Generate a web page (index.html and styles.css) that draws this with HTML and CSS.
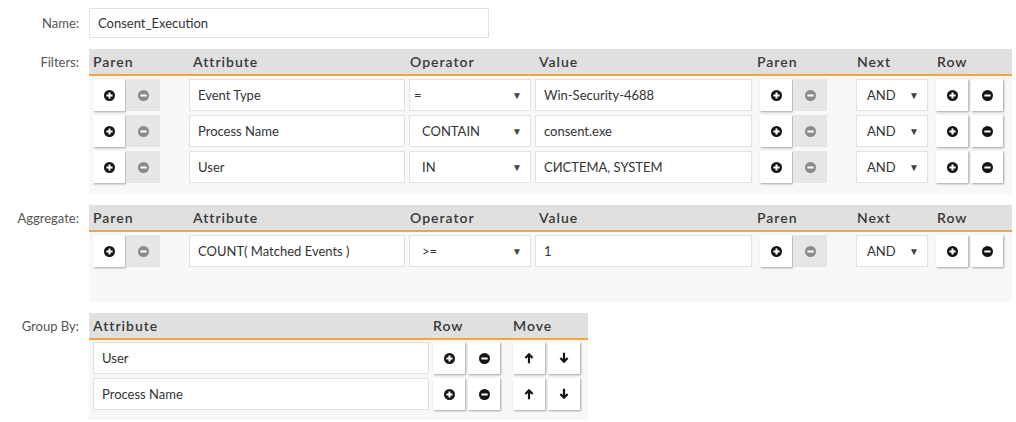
FILE: index.html
```html
<!DOCTYPE html>
<html>
<head>
<meta charset="utf-8">
<link rel="stylesheet" href="styles.css">
</head>
<body>
<svg width="0" height="0" class="defs">
  <defs>
    <symbol id="plus" viewBox="0 0 12 12"><circle cx="6" cy="6" r="6" fill="currentColor"/><path d="M6 2.6v6.8M2.6 6h6.8" stroke="#fff" stroke-width="2.2"/></symbol>
    <symbol id="minus" viewBox="0 0 12 12"><circle cx="6" cy="6" r="6" fill="currentColor"/><path d="M2.6 6h6.8" stroke="#fff" stroke-width="2.2"/></symbol>
    <symbol id="up" viewBox="0 0 10 12"><path d="M5 0.8L0.6 5.3l1.5 1.5L3.9 5V11.2h2.2V5l1.8 1.8 1.5-1.5z" fill="currentColor"/></symbol>
    <symbol id="down" viewBox="0 0 10 12"><path d="M5 11.2L0.6 6.7l1.5-1.5L3.9 7V0.8h2.2V7l1.8-1.8 1.5 1.5z" fill="currentColor"/></symbol>
  </defs>
</svg>
<div class="form">
  <div class="field">
    <div class="label name-label">Name:</div>
    <div class="input name-input">Consent_Execution</div>
  </div>

  <div class="field">
    <div class="label">Filters:</div>
    <div class="panel filter-panel">
      <div class="grid head">
        <div class="h">Paren</div><div class="h">Attribute</div><div class="h t">Operator</div><div class="h">Value</div><div class="h t">Paren</div><div class="h t">Next</div><div class="h t">Row</div>
      </div>
      <div class="grid row">
        <div class="btns"><span class="btn"><svg><use href="#plus"/></svg></span><span class="btn off"><svg><use href="#minus"/></svg></span></div>
        <div class="input attr">Event Type</div>
        <div class="input select op"><span class="eq">=</span><i>▼</i></div>
        <div class="input val">Win-Security-4688</div>
        <div class="btns"><span class="btn"><svg><use href="#plus"/></svg></span><span class="btn off"><svg><use href="#minus"/></svg></span></div>
        <div class="input select next">AND<i>▼</i></div>
        <div class="btns gap3"><span class="btn"><svg><use href="#plus"/></svg></span><span class="btn"><svg><use href="#minus"/></svg></span></div>
      </div>
      <div class="grid row">
        <div class="btns"><span class="btn"><svg><use href="#plus"/></svg></span><span class="btn off"><svg><use href="#minus"/></svg></span></div>
        <div class="input attr">Process Name</div>
        <div class="input select op">CONTAIN<i>▼</i></div>
        <div class="input val">consent.exe</div>
        <div class="btns"><span class="btn"><svg><use href="#plus"/></svg></span><span class="btn off"><svg><use href="#minus"/></svg></span></div>
        <div class="input select next">AND<i>▼</i></div>
        <div class="btns gap3"><span class="btn"><svg><use href="#plus"/></svg></span><span class="btn"><svg><use href="#minus"/></svg></span></div>
      </div>
      <div class="grid row">
        <div class="btns"><span class="btn"><svg><use href="#plus"/></svg></span><span class="btn off"><svg><use href="#minus"/></svg></span></div>
        <div class="input attr">User</div>
        <div class="input select op">IN<i>▼</i></div>
        <div class="input val">СИСТЕМА, SYSTEM</div>
        <div class="btns"><span class="btn"><svg><use href="#plus"/></svg></span><span class="btn off"><svg><use href="#minus"/></svg></span></div>
        <div class="input select next">AND<i>▼</i></div>
        <div class="btns gap3"><span class="btn"><svg><use href="#plus"/></svg></span><span class="btn"><svg><use href="#minus"/></svg></span></div>
      </div>
    </div>
  </div>

  <div class="field">
    <div class="label">Aggregate:</div>
    <div class="panel agg-panel">
      <div class="grid head">
        <div class="h">Paren</div><div class="h">Attribute</div><div class="h t">Operator</div><div class="h">Value</div><div class="h t">Paren</div><div class="h t">Next</div><div class="h t">Row</div>
      </div>
      <div class="grid row">
        <div class="btns"><span class="btn"><svg><use href="#plus"/></svg></span><span class="btn off"><svg><use href="#minus"/></svg></span></div>
        <div class="input attr">COUNT( Matched Events )</div>
        <div class="input select op">&gt;=<i>▼</i></div>
        <div class="input val">1</div>
        <div class="btns"><span class="btn"><svg><use href="#plus"/></svg></span><span class="btn off"><svg><use href="#minus"/></svg></span></div>
        <div class="input select next">AND<i>▼</i></div>
        <div class="btns gap3"><span class="btn"><svg><use href="#plus"/></svg></span><span class="btn"><svg><use href="#minus"/></svg></span></div>
      </div>
    </div>
  </div>

  <div class="field">
    <div class="label">Group By:</div>
    <div class="panel group-panel">
      <div class="ggrid head">
        <div class="h">Attribute</div><div class="h z">Row</div><div class="h z">Move</div>
      </div>
      <div class="ggrid row">
        <div class="input gattr">User</div>
        <div class="btns gap3"><span class="btn"><svg><use href="#plus"/></svg></span><span class="btn"><svg><use href="#minus"/></svg></span></div>
        <div class="btns gap3"><span class="btn"><svg class="arrow"><use href="#up"/></svg></span><span class="btn"><svg class="arrow"><use href="#down"/></svg></span></div>
      </div>
      <div class="ggrid row">
        <div class="input gattr">Process Name</div>
        <div class="btns gap3"><span class="btn"><svg><use href="#plus"/></svg></span><span class="btn"><svg><use href="#minus"/></svg></span></div>
        <div class="btns gap3"><span class="btn"><svg class="arrow"><use href="#up"/></svg></span><span class="btn"><svg class="arrow"><use href="#down"/></svg></span></div>
      </div>
    </div>
  </div>
</div>
</body>
</html>
```

FILE: styles.css
```css
* { box-sizing: border-box; }
html, body { margin: 0; background: #fff; }
body {
  font-family: Lato, "Open Sans", "Liberation Sans", sans-serif;
  font-size: 13px;
  color: #333;
}
.defs { position: absolute; }
.form { padding-top: 8px; }
.field {
  display: grid;
  grid-template-columns: 89px auto;
  align-items: start;
  margin-bottom: 11px;
}
.label {
  text-align: right;
  padding-right: 10px;
  color: #555;
  line-height: 27px;
  font-size: 13px;
}
.name-label { line-height: 30px; }
.input {
  background: #fff;
  border: 1px solid #e2e2e2;
  height: 32px;
  line-height: 30px;
  padding-left: 8px;
  color: #333;
  white-space: nowrap;
  overflow: hidden;
}
.name-input { width: 400px; height: 30px; line-height: 28px; }
.panel { background: #f8f8f8; justify-self: start; }
.filter-panel { width: 923px; padding-bottom: 11px; }
.agg-panel { width: 923px; padding-bottom: 35px; }
.group-panel { width: 499px; padding-bottom: 10px; }
.grid {
  display: grid;
  grid-template-columns: 100px 220px 126px 221px 100px 80px 76px;
}
.ggrid {
  display: grid;
  grid-template-columns: 344px 80px 75px;
}
.head {
  background: #e0e0e0;
  height: 27px;
  border-bottom: 2px solid #eea83a;
  font-weight: 600;
  font-size: 14px;
  letter-spacing: 1px;
  color: #383838;
}
.h { line-height: 26px; padding-left: 4px; }
.h.t { padding-left: 1px; }
.h.z { padding-left: 0; }
.row { margin-top: 4px; height: 32px; }
.head + .row { margin-top: 3px; }
.ggrid.head + .row { margin-top: 2px; }
.grid .btns { padding-left: 4px; }
.btns { display: flex; gap: 1px; }
.btns.gap3 { gap: 3px; padding-left: 0; }
.btn {
  width: 32px; height: 32px;
  background: #fff;
  box-shadow: 1px 1px 2px rgba(0,0,0,0.35);
  display: flex; align-items: center; justify-content: center;
  color: #151515;
}
.btn.off { background: #e6e6e6; box-shadow: none; color: #8a8a8a; width: 34px; }
.btn svg { width: 11px; height: 11px; }
.btn svg.arrow { width: 10px; height: 12px; }
.attr { width: 216px; }
.op { width: 122px; }
.val { width: 217px; }
.next { width: 72px; padding-left: 10px; }
.select { position: relative; }
.select i {
  position: absolute;
  right: 8px; top: 0;
  font-style: normal;
  font-size: 10px;
  color: #444;
}
.op { padding-left: 12px; }
.eq { margin-left: -8px; }
.gattr { width: 336px; margin-left: 4px; }
```
